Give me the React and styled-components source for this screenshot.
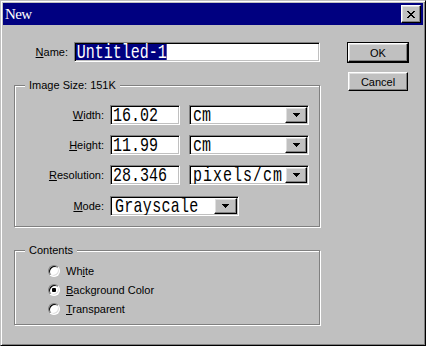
import React from 'react';
import styled, { createGlobalStyle } from 'styled-components';

const Global = createGlobalStyle`
  html, body { margin: 0; padding: 0; background: #c0c0c0; }
  body { width: 426px; height: 346px; overflow: hidden; }
`;

const Window = styled.div`
  box-sizing: border-box;
  width: 426px;
  height: 346px;
  background: #c0c0c0;
  border: 1px solid;
  border-color: #c0c0c0 #000 #000 #c0c0c0;
  box-shadow: inset 1px 1px #fff, inset -1px -1px #808080;
  padding: 2px;
  display: flex;
  flex-direction: column;
  font-family: "Liberation Sans", Arial, sans-serif;
  font-size: 11px;
  color: #000;
`;

const TitleBar = styled.div`
  height: 22px;
  background: #000080;
  color: #fff;
  display: flex;
  align-items: center;
  justify-content: space-between;
  padding: 0 2px;
`;

const TitleText = styled.span`
  font-family: "Liberation Serif", "Times New Roman", serif;
  font-size: 15px;
  letter-spacing: -0.6px;
  line-height: 18px;
`;

const Raised = styled.div`
  box-sizing: border-box;
  background: #c0c0c0;
  border: 1px solid;
  border-color: #fff #000 #000 #fff;
  box-shadow: inset -1px -1px #808080, inset 1px 1px #dfdfdf;
  display: flex;
  align-items: center;
  justify-content: center;
`;

const CloseButton = styled(Raised)`
  width: 20px;
  height: 18px;
`;

const Body = styled.div`
  display: flex;
  padding: 17px 0 0 11px;
`;

const LeftColumn = styled.div`
  width: 307px;
  display: flex;
  flex-direction: column;
`;

const RightColumn = styled.div`
  margin-left: 27px;
  display: flex;
  flex-direction: column;
  padding-top: 1px;
`;

const Button = styled(Raised)`
  width: 60px;
  height: 19px;
  margin-top: ${p => p.$top || 0}px;
  outline: ${p => (p.$default ? '1px solid #000' : 'none')};
  font-size: 11px;
`;

const Row = styled.div`
  display: flex;
  align-items: center;
  height: 20px;
  margin-top: ${p => p.$top || 0}px;
`;

const Label = styled.span`
  width: ${p => p.$width}px;
  margin-right: 6px;
  text-align: right;
  white-space: nowrap;
`;

const Key = styled.u`
  text-decoration: underline;
`;

const Field = styled.div`
  box-sizing: border-box;
  width: ${p => p.$width}px;
  height: 20px;
  margin-left: ${p => p.$left || 0}px;
  background: #fff;
  border: 1px solid;
  border-color: #808080 #fff #fff #808080;
  box-shadow: inset 1px 1px #000, inset -1px -1px #c0c0c0;
  padding: 1px ${p => p.$right || 1}px 1px ${p => p.$pad || 1}px;
  display: flex;
  align-items: stretch;
  justify-content: space-between;
  overflow: hidden;
`;

const FieldText = styled.span`
  display: block;
  flex: ${p => (p.$selected ? 'none' : '1 1 0')};
  min-width: 0;
  font-family: "Liberation Mono", "Courier New", monospace;
  font-size: 21px;
  line-height: 14px;
  padding: 2px 0 0 ${p => p.$indent || 0}px;
  letter-spacing: ${p => p.$spacing || 0}px;
  transform: scaleX(0.714);
  transform-origin: left center;
  white-space: pre;
  background: ${p => (p.$selected ? '#000080' : 'transparent')};
  color: ${p => (p.$selected ? '#fff' : '#000')};
`;

const ArrowButton = styled(Raised)`
  width: ${p => p.$width || 22}px;
  height: 16px;
  flex: none;
`;

const Group = styled.div`
  box-sizing: border-box;
  width: 306px;
  margin-top: ${p => p.$top}px;
  border: 1px solid #808080;
  box-shadow: inset 1px 1px #fff, 1px 1px #fff;
  display: flex;
  flex-direction: column;
  padding-bottom: ${p => p.$bottom}px;
`;

const Legend = styled.span`
  align-self: flex-start;
  margin: -7px 0 0 10px;
  padding: 0 4px;
  line-height: 13px;
  background: #c0c0c0;
`;

const Rows = styled.div`
  display: flex;
  flex-direction: column;
  gap: 10px;
  padding-top: ${p => p.$top}px;
`;

const RadioList = styled.div`
  display: flex;
  flex-direction: column;
  padding: 4px 0 0 33px;
`;

const RadioRow = styled.label`
  display: flex;
  align-items: center;
  height: 19px;
`;

const RadioCircle = styled.span`
  box-sizing: border-box;
  width: 12px;
  height: 12px;
  border-radius: 50%;
  border: 1px solid;
  border-color: #808080 #fff #fff #808080;
  box-shadow: inset 1px 1px #000, inset -1px -1px #dfdfdf;
  background: #fff;
  margin-right: 6px;
  display: flex;
  align-items: center;
  justify-content: center;
  &::after {
    content: '';
    width: 4px;
    height: 4px;
    border-radius: 1px;
    background: ${p => (p.$checked ? '#000' : 'transparent')};
  }
`;

const CloseGlyph = () => (
  <svg width="8" height="7" viewBox="0 0 8 7" shapeRendering="crispEdges">
    <path
      fill="#000"
      d="M0 0h2v1H0zM6 0h2v1H6zM1 1h2v1H1zM5 1h2v1H5zM2 2h4v1H2zM3 3h2v1H3zM2 4h4v1H2zM1 5h2v1H1zM5 5h2v1H5zM0 6h2v1H0zM6 6h2v1H6z"
    />
  </svg>
);

const DownArrow = () => (
  <svg width="7" height="4" viewBox="0 0 7 4" shapeRendering="crispEdges">
    <path fill="#000" d="M0 0h7v1H0zM1 1h5v1H1zM2 2h3v1H2zM3 3h1v1H3z" />
  </svg>
);

const Select = ({ width, value, spacing, arrow, pad }) => (
  <Field $width={width} $left={9} $pad={pad || 3} $right={1}>
    <FieldText $spacing={spacing}>{value}</FieldText>
    <ArrowButton $width={arrow}>
      <DownArrow />
    </ArrowButton>
  </Field>
);

const SizeRow = ({ k, rest, value, unit, unitSpacing }) => (
  <Row>
    <Label $width={89}>
      <Key>{k}</Key>
      {rest}
    </Label>
    <Field $width={70} $pad={2}>
      <FieldText>{value}</FieldText>
    </Field>
    <Select width={120} value={unit} spacing={unitSpacing} arrow={22} pad={3} />
  </Row>
);

const Radio = ({ checked, before, k, after }) => (
  <RadioRow>
    <RadioCircle $checked={checked} />
    <span>
      {before}
      <Key>{k}</Key>
      {after}
    </span>
  </RadioRow>
);

export default function App() {
  return (
    <>
      <Global />
      <Window>
        <TitleBar>
          <TitleText>New</TitleText>
          <CloseButton>
            <CloseGlyph />
          </CloseButton>
        </TitleBar>
        <Body>
          <LeftColumn>
            <Row>
              <Label $width={54}>
                <Key>N</Key>ame:
              </Label>
              <Field $width={246}>
                <FieldText $selected $indent={1}>
                  Untitled-1
                </FieldText>
              </Field>
            </Row>
            <Group $top={23} $bottom={10}>
              <Legend>Image Size: 151K</Legend>
              <Rows $top={13}>
                <SizeRow k="W" rest="idth:" value="16.02" unit="cm" />
                <SizeRow k="H" rest="eight:" value="11.99" unit="cm" />
                <SizeRow k="R" rest="esolution:" value="28.346" unit="pixels/cm" unitSpacing={1.4} />
                <Row $top={1}>
                  <Label $width={89}>
                    <Key>M</Key>ode:
                  </Label>
                  <Field $width={129} $pad={4} $right={1}>
                    <FieldText $spacing={0.4}>Grayscale</FieldText>
                    <ArrowButton $width={23}>
                      <DownArrow />
                    </ArrowButton>
                  </Field>
                </Row>
              </Rows>
            </Group>
            <Group $top={23} $bottom={6}>
              <Legend>Contents</Legend>
              <RadioList>
                <Radio before="Wh" k="i" after="te" />
                <Radio checked k="B" after="ackground Color" />
                <Radio k="T" after="ransparent" />
              </RadioList>
            </Group>
          </LeftColumn>
          <RightColumn>
            <Button $default>OK</Button>
            <Button $top={10}>Cancel</Button>
          </RightColumn>
        </Body>
      </Window>
    </>
  );
}
